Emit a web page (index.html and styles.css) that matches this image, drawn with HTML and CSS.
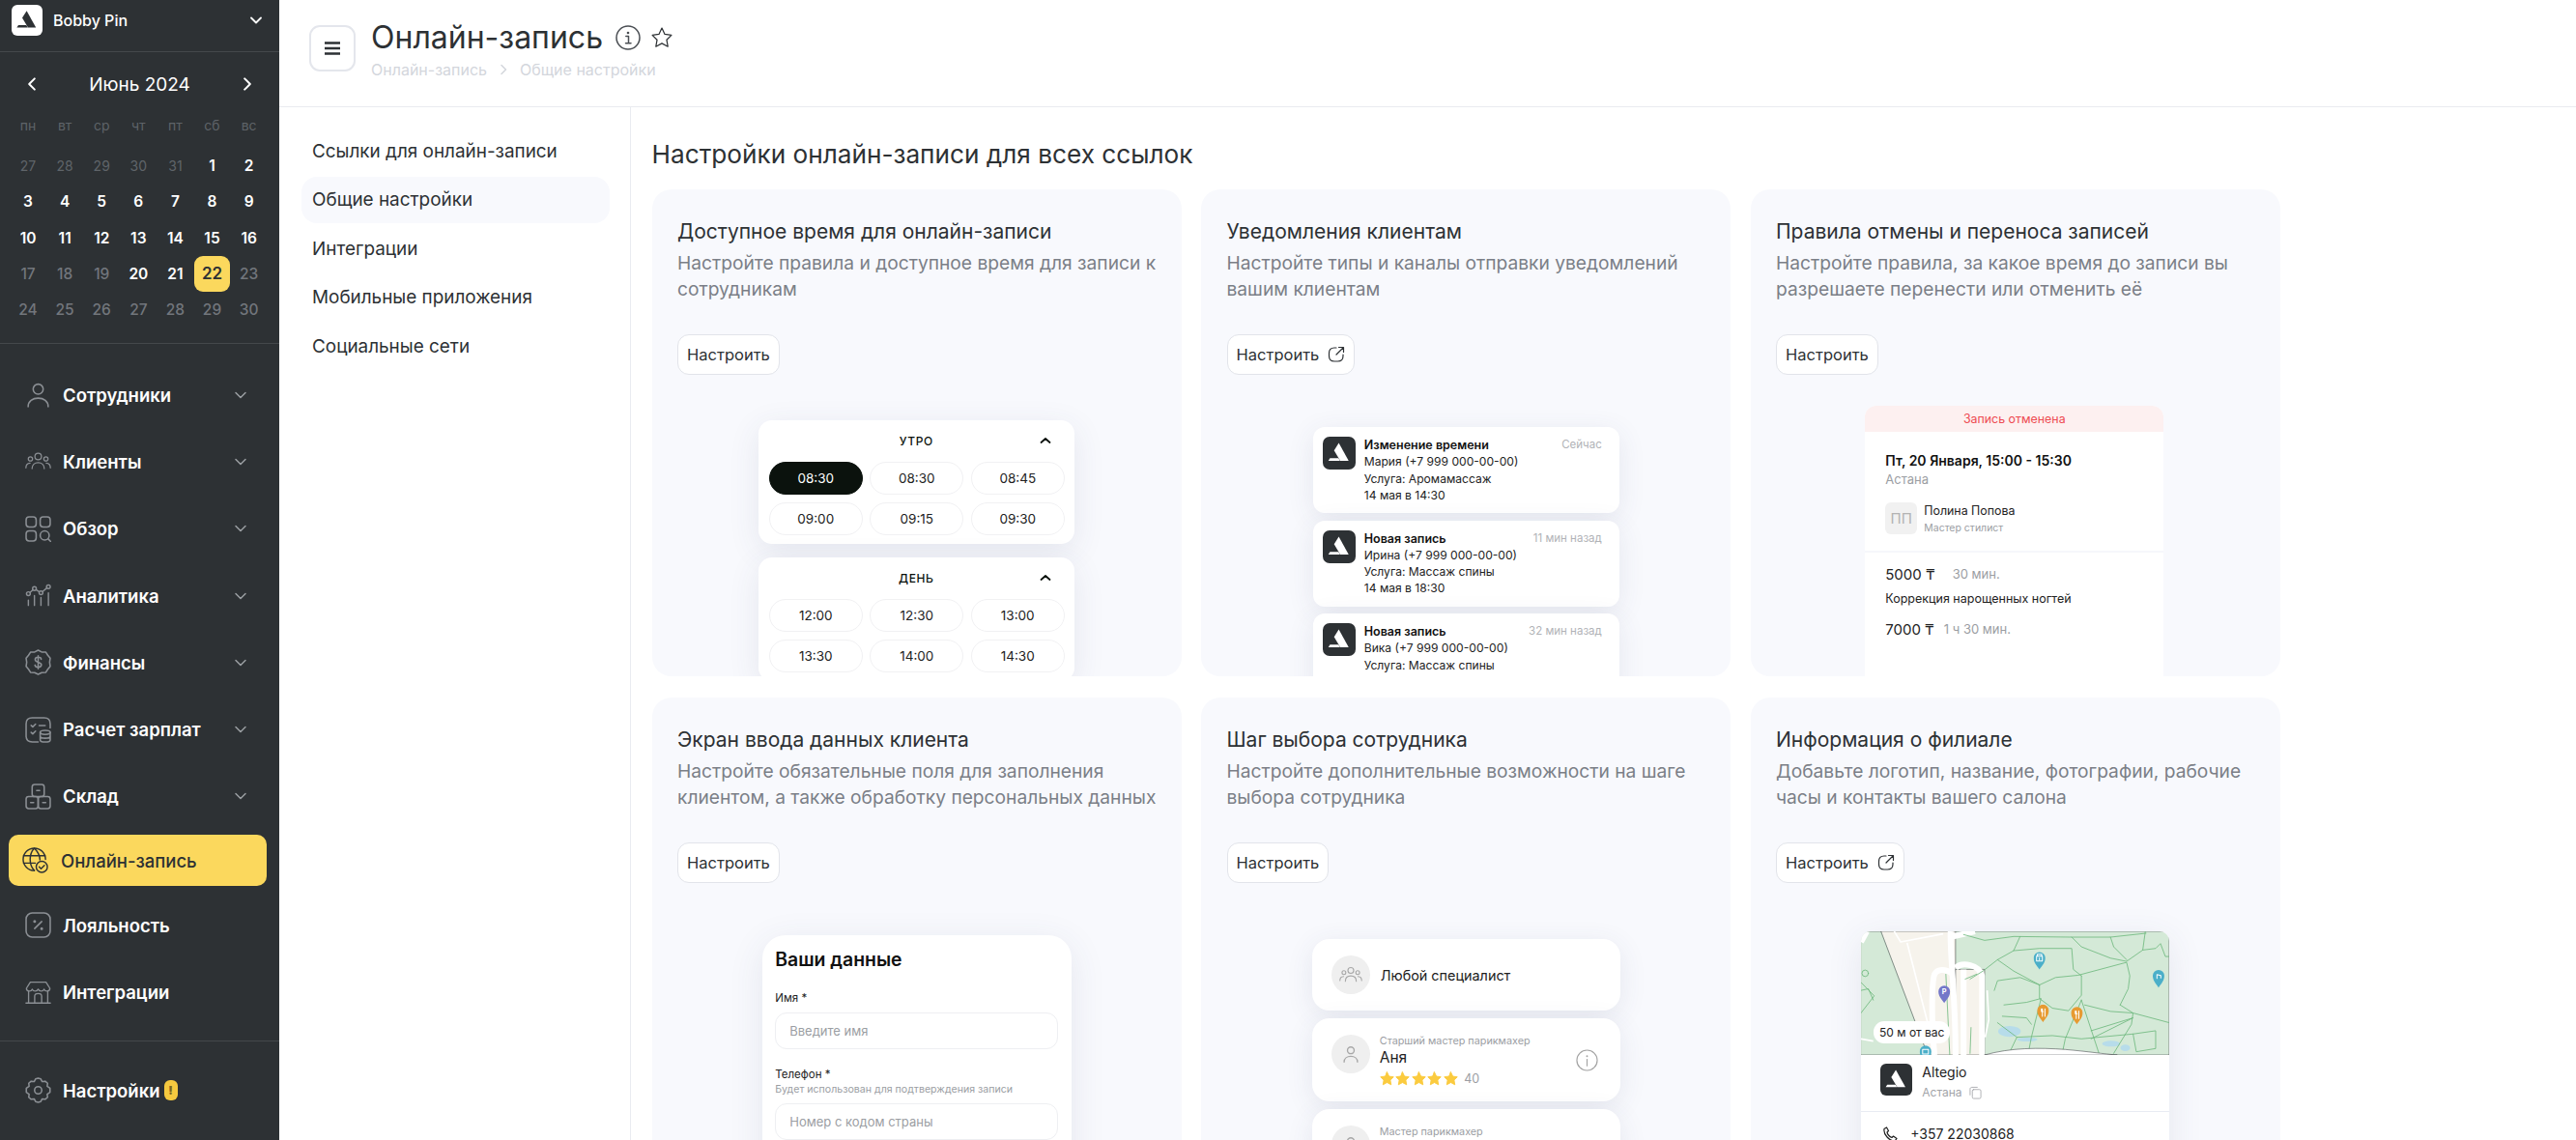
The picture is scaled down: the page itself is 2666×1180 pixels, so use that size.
FILE: index.html
```html
<!DOCTYPE html>
<html lang="ru">
<head>
    <meta charset="UTF-8">
    <meta name="viewport" content="width=device-width, initial-scale=1.0">
    <title>Онлайн-запись</title>
    <link rel="stylesheet" href="styles.css">
</head>
<body>

<svg class="sprite" width="0" height="0">
    <symbol id="logo-mark" viewBox="0 0 32 32">
        <path d="M15.600 6.200 L25.200 23.600 H17 L11 13.500 Z"/>
        <path d="M7 21 H15.200 L16.800 23.600 H5.400 Z"/>
    </symbol>
    <symbol id="chev" viewBox="0 0 16 16"><path d="M3 5.500 L8 10.500 L13 5.500"/></symbol>
    <symbol id="ic-user" viewBox="0 0 26 26">
        <circle cx="13" cy="7.500" r="5"/><path d="M3 25 C3 19.500 7.500 16.500 13 16.500 S23 19.500 23 25"/>
    </symbol>
    <symbol id="ic-clients" viewBox="0 0 32 26">
        <circle cx="16" cy="7" r="4"/><circle cx="6.500" cy="10" r="2.600"/><circle cx="25.500" cy="10" r="2.600"/>
        <path d="M8.500 22 C8.500 17 12 14.500 16 14.500 S23.500 17 23.500 22"/>
        <path d="M1 21 C1 17.500 3 15.500 6 15.300"/><path d="M31 21 C31 17.500 29 15.500 26 15.300"/>
    </symbol>
    <symbol id="ic-review" viewBox="0 0 26 26">
        <rect x="1" y="1" width="10" height="10" rx="3"/><rect x="15" y="1" width="10" height="10" rx="3"/>
        <rect x="1" y="15" width="10" height="10" rx="3"/><circle cx="19.500" cy="19.500" r="4.500"/><path d="M23 23 L26 26"/>
    </symbol>
    <symbol id="ic-chart" viewBox="0 0 28 26">
        <circle cx="3.500" cy="11" r="2"/><circle cx="10" cy="5.500" r="2"/><circle cx="17" cy="10" r="2"/><circle cx="25" cy="3.500" r="2"/>
        <path d="M5.300 9.700 L8.400 6.800 M11.700 6.600 L15.300 9 M18.600 8.800 L23.300 4.800"/>
        <path d="M3.500 18 V23.500 M10 13 V23.500 M17 15 V23.500 M25 10 V23.500"/>
    </symbol>
    <symbol id="ic-money" viewBox="0 0 26 26">
        <path d="M13 1 L16.500 2.800 L20.500 2.800 L22.600 6 L25 9 L24.400 13 L25 17 L22.600 20 L20.500 23.200 L16.500 23.400 L13 25 L9.500 23.400 L5.500 23.200 L3.400 20 L1 17 L1.600 13 L1 9 L3.400 6 L5.500 2.800 L9.500 2.800 Z"/>
        <path d="M16 10 C16 8.400 14.600 8 13 8 C11.200 8 10 8.900 10 10.400 C10 13.600 16.200 12.200 16.200 15.500 C16.200 17.100 14.800 18 13 18 C11.200 18 10 17.300 9.800 15.800 M13 6.600 V19.400"/>
    </symbol>
    <symbol id="ic-payroll" viewBox="0 0 26 26">
        <path d="M13 25 H7 C3 25 1 23 1 19 V7 C1 3 3 1 7 1 H19 C23 1 25 3 25 7 V11"/>
        <path d="M6 8.500 L7.600 10 L10.400 7.200 M14 8.600 H20 M6 15.500 L7.600 17 L10.400 14.200"/>
        <ellipse cx="20" cy="15.500" rx="5" ry="2"/><path d="M15 15.500 V23 C15 24.200 17.200 25 20 25 S25 24.200 25 23 V15.500 M15 19.300 C15 20.500 17.200 21.300 20 21.300 S25 20.500 25 19.300"/>
    </symbol>
    <symbol id="ic-boxes" viewBox="0 0 26 26">
        <rect x="7" y="1" width="12" height="12" rx="2.500"/><rect x="1" y="13" width="12" height="12" rx="2.500"/><rect x="13" y="13" width="12" height="12" rx="2.500"/>
        <path d="M11.500 7 H14.500 M5.500 19 H8.500 M17.500 19 H20.500"/>
    </symbol>
    <symbol id="ic-globe" viewBox="0 0 28 28">
        <path d="M25 13 A12 12 0 1 0 13 25"/><path d="M13 1 C7 7 7 19 13 25 M13 1 C17.500 5.500 19 10 19 13.500 M1.500 9 H24.500 M1.500 17 H14"/>
        <circle cx="21" cy="21" r="6"/><path d="M18.200 21 L20.200 23 L23.800 19.400"/>
    </symbol>
    <symbol id="ic-percent" viewBox="0 0 26 26">
        <rect x="1" y="1" width="24" height="24" rx="6"/><path d="M16.500 9.500 L9.500 16.500"/><circle cx="9.500" cy="9.500" r=".7"/><circle cx="16.500" cy="16.500" r=".7"/>
    </symbol>
    <symbol id="ic-store" viewBox="0 0 30 26">
        <path d="M1 25 H29 M4 11 V25 M26 11 V25 M11 25 V17 C11 15 13 14 15 14 S19 15 19 17 V25"/>
        <path d="M6 1 H24 L28.500 8 C28.500 12 23 12 21.800 9 C20.500 12 16.400 12 15 9 C13.600 12 9.500 12 8.200 9 C7 12 1.500 12 1.500 8 Z"/>
    </symbol>
    <symbol id="ic-gear" viewBox="0 0 26 26">
        <path d="M13 1 L15.600 1.800 L17 4.400 L20 4 L22.400 6 L22 9 L24.800 11 L24.800 15 L22 17 L22.400 20 L20 22 L17 21.600 L15.600 24.200 L13 25 L10.400 24.200 L9 21.600 L6 22 L3.600 20 L4 17 L1.200 15 L1.200 11 L4 9 L3.600 6 L6 4 L9 4.400 L10.400 1.800 Z"/>
        <circle cx="13" cy="13" r="3.600"/>
    </symbol>
    <symbol id="ic-out" viewBox="0 0 18 18">
        <path d="M9 2 H7 C3.500 2 1.500 4 1.500 7.500 V10.500 C1.500 14 3.500 16 7 16 H10.500 C14 16 16 14 16 10.500 V9"/><path d="M9 9 L16 2 M11.500 1.500 H16.500 V6.500"/>
    </symbol>
    <symbol id="ic-star" viewBox="0 0 16 16"><path d="M8 .8 L10.200 5.400 L15.200 6.100 L11.600 9.600 L12.500 14.700 L8 12.300 L3.500 14.700 L4.400 9.600 L.8 6.100 L5.800 5.400 Z"/></symbol>
    <symbol id="ic-pin" viewBox="0 0 38 56"><path d="M19 56 C17 48 1 38 1 19 A18 18 0 0 1 37 19 C37 38 21 48 19 56 Z"/></symbol>
</svg>

<div class="app">
    <aside class="sidebar">
        <div class="brand">
            <span class="brand-logo"><svg class="logo-mark"><use href="#logo-mark"/></svg></span>
            <span class="brand-name">Bobby Pin</span>
            <svg class="brand-chev"><use href="#chev"/></svg>
        </div>

        <div class="calendar">
            <div class="cal-head">
                <svg class="cal-arrow" viewBox="0 0 16 16"><path d="M10.500 3 L5.500 8 L10.500 13"/></svg>
                <span>Июнь 2024</span>
                <svg class="cal-arrow" viewBox="0 0 16 16"><path d="M5.500 3 L10.500 8 L5.500 13"/></svg>
            </div>
            <div class="cal-week">
                <span>пн</span><span>вт</span><span>ср</span><span>чт</span><span>пт</span><span>сб</span><span>вс</span>
            </div>
            <div class="cal-days">
                <span class="d-old">27</span><span class="d-old">28</span><span class="d-old">29</span><span class="d-old">30</span><span class="d-old">31</span><span>1</span><span>2</span>
                <span>3</span><span>4</span><span>5</span><span>6</span><span>7</span><span>8</span><span>9</span>
                <span>10</span><span>11</span><span>12</span><span>13</span><span>14</span><span>15</span><span>16</span>
                <span class="d-off">17</span><span class="d-off">18</span><span class="d-off">19</span><span>20</span><span>21</span><span class="d-today">22</span><span class="d-off">23</span>
                <span class="d-off">24</span><span class="d-off">25</span><span class="d-off">26</span><span class="d-off">27</span><span class="d-off">28</span><span class="d-off">29</span><span class="d-off">30</span>
            </div>
        </div>

        <nav class="nav">
            <a class="nav-item"><svg class="nav-icon"><use href="#ic-user"/></svg><span>Сотрудники</span><svg class="nav-chev"><use href="#chev"/></svg></a>
            <a class="nav-item"><svg class="nav-icon"><use href="#ic-clients"/></svg><span>Клиенты</span><svg class="nav-chev"><use href="#chev"/></svg></a>
            <a class="nav-item"><svg class="nav-icon"><use href="#ic-review"/></svg><span>Обзор</span><svg class="nav-chev"><use href="#chev"/></svg></a>
            <a class="nav-item"><svg class="nav-icon"><use href="#ic-chart"/></svg><span>Аналитика</span><svg class="nav-chev"><use href="#chev"/></svg></a>
            <a class="nav-item"><svg class="nav-icon"><use href="#ic-money"/></svg><span>Финансы</span><svg class="nav-chev"><use href="#chev"/></svg></a>
            <a class="nav-item"><svg class="nav-icon"><use href="#ic-payroll"/></svg><span>Расчет зарплат</span><svg class="nav-chev"><use href="#chev"/></svg></a>
            <a class="nav-item"><svg class="nav-icon"><use href="#ic-boxes"/></svg><span>Склад</span><svg class="nav-chev"><use href="#chev"/></svg></a>
            <a class="nav-item active"><svg class="nav-icon"><use href="#ic-globe"/></svg><span>Онлайн-запись</span></a>
            <a class="nav-item"><svg class="nav-icon"><use href="#ic-percent"/></svg><span>Лояльность</span></a>
            <a class="nav-item"><svg class="nav-icon"><use href="#ic-store"/></svg><span>Интеграции</span></a>
        </nav>

        <div class="nav-bottom">
            <a class="nav-item"><svg class="nav-icon"><use href="#ic-gear"/></svg><span>Настройки</span><b class="nav-badge">!</b></a>
        </div>
    </aside>

    <main class="main">
        <header class="topbar">
            <button class="menu-btn">
                <svg viewBox="0 0 18 14"><path d="M1 1.500 H17 M1 7 H17 M1 12.500 H17"/></svg>
            </button>
            <div class="title-block">
                <div class="title-row">
                    <h1>Онлайн-запись</h1>
                    <svg class="title-info" viewBox="0 0 26 26"><circle cx="13" cy="13" r="12"/><circle class="dot" cx="13" cy="8" r="1.300"/><path d="M10.800 11.500 H13.500 V18.500 M10.500 18.800 H16"/></svg>
                    <svg class="title-star"><use href="#ic-star"/></svg>
                </div>
                <div class="crumbs">
                    <span>Онлайн-запись</span>
                    <svg viewBox="0 0 12 12"><path d="M4 1.500 L8.500 6 L4 10.500"/></svg>
                    <span>Общие настройки</span>
                </div>
            </div>
        </header>

        <div class="body">
            <div class="subnav">
                <a>Ссылки для онлайн-записи</a>
                <a class="active">Общие настройки</a>
                <a>Интеграции</a>
                <a>Мобильные приложения</a>
                <a>Социальные сети</a>
            </div>

            <section class="content">
                <h2>Настройки онлайн-записи для всех ссылок</h2>
                <div class="cards">

                    <article class="card">
                        <h3>Доступное время для онлайн-записи</h3>
                        <p>Настройте правила и доступное время для записи к сотрудникам</p>
                        <button class="btn">Настроить</button>
                        <div class="preview pv-time">
                            <div class="time-panel">
                                <div class="time-head"><span>УТРО</span><svg viewBox="0 0 12 8"><path d="M1.500 6 L6 2 L10.500 6"/></svg></div>
                                <div class="time-grid">
                                    <span class="on">08:30</span><span>08:30</span><span>08:45</span>
                                    <span>09:00</span><span>09:15</span><span>09:30</span>
                                </div>
                            </div>
                            <div class="time-panel">
                                <div class="time-head"><span>ДЕНЬ</span><svg viewBox="0 0 12 8"><path d="M1.500 6 L6 2 L10.500 6"/></svg></div>
                                <div class="time-grid">
                                    <span>12:00</span><span>12:30</span><span>13:00</span>
                                    <span>13:30</span><span>14:00</span><span>14:30</span>
                                </div>
                            </div>
                        </div>
                    </article>

                    <article class="card">
                        <h3>Уведомления клиентам</h3>
                        <p>Настройте типы и каналы отправки уведомлений вашим клиентам</p>
                        <button class="btn">Настроить<svg><use href="#ic-out"/></svg></button>
                        <div class="preview pv-notes">
                            <div class="note">
                                <span class="note-logo"><svg class="logo-mark"><use href="#logo-mark"/></svg></span>
                                <div class="note-text"><strong>Изменение времени</strong><span>Мария (+7 999 000-00-00)</span><span>Услуга: Аромамассаж</span><span>14 мая в 14:30</span></div>
                                <time>Сейчас</time>
                            </div>
                            <div class="note">
                                <span class="note-logo"><svg class="logo-mark"><use href="#logo-mark"/></svg></span>
                                <div class="note-text"><strong>Новая запись</strong><span>Ирина (+7 999 000-00-00)</span><span>Услуга: Массаж спины</span><span>14 мая в 18:30</span></div>
                                <time>11 мин назад</time>
                            </div>
                            <div class="note">
                                <span class="note-logo"><svg class="logo-mark"><use href="#logo-mark"/></svg></span>
                                <div class="note-text"><strong>Новая запись</strong><span>Вика (+7 999 000-00-00)</span><span>Услуга: Массаж спины</span></div>
                                <time>32 мин назад</time>
                            </div>
                        </div>
                    </article>

                    <article class="card">
                        <h3>Правила отмены и переноса записей</h3>
                        <p>Настройте правила, за какое время до записи вы разрешаете перенести или отменить её</p>
                        <button class="btn">Настроить</button>
                        <div class="preview pv-cancel">
                            <div class="cancel-card">
                                <div class="cancel-head">Запись отменена</div>
                                <div class="cancel-top">
                                    <strong>Пт, 20 Января, 15:00 - 15:30</strong>
                                    <span class="muted">Астана</span>
                                    <div class="cancel-person">
                                        <span class="cancel-avatar">ПП</span>
                                        <div><span class="cancel-name">Полина Попова</span><span class="cancel-role">Мастер стилист</span></div>
                                    </div>
                                </div>
                                <div class="cancel-bottom">
                                    <div class="price-row"><span>5000 ₸</span><span class="muted price-gap">30 мин.</span></div>
                                    <div class="cancel-service">Коррекция нарощенных ногтей</div>
                                    <div class="price-row"><span>7000 ₸</span><span class="muted">1 ч 30 мин.</span></div>
                                </div>
                            </div>
                        </div>
                    </article>

                    <article class="card">
                        <h3>Экран ввода данных клиента</h3>
                        <p>Настройте обязательные поля для заполнения клиентом, а также обработку персональных данных</p>
                        <button class="btn">Настроить</button>
                        <div class="preview pv-form">
                            <div class="form-card">
                                <h4>Ваши данные</h4>
                                <label>Имя *</label>
                                <div class="fake-input">Введите имя</div>
                                <label class="label-second">Телефон *</label>
                                <small>Будет использован для подтверждения записи</small>
                                <div class="fake-input">Номер с кодом страны</div>
                            </div>
                        </div>
                    </article>

                    <article class="card">
                        <h3>Шаг выбора сотрудника</h3>
                        <p>Настройте дополнительные возможности на шаге выбора сотрудника</p>
                        <button class="btn">Настроить</button>
                        <div class="preview pv-staff">
                            <div class="staff any">
                                <span class="staff-ava"><svg class="ava-many"><use href="#ic-clients"/></svg></span>
                                <span class="staff-any">Любой специалист</span>
                            </div>
                            <div class="staff">
                                <span class="staff-ava"><svg class="ava-one"><use href="#ic-user"/></svg></span>
                                <div class="staff-text">
                                    <span class="staff-role">Старший мастер парикмахер</span>
                                    <span class="staff-name">Аня</span>
                                    <span class="stars">
                                        <svg><use href="#ic-star"/></svg><svg><use href="#ic-star"/></svg><svg><use href="#ic-star"/></svg><svg><use href="#ic-star"/></svg><svg><use href="#ic-star"/></svg><em>40</em>
                                    </span>
                                </div>
                                <svg class="staff-info" viewBox="0 0 24 24"><circle cx="12" cy="12" r="11"/><circle class="dot" cx="12" cy="7.500" r="1"/><path d="M12 11 V18"/></svg>
                            </div>
                            <div class="staff">
                                <span class="staff-ava"><svg class="ava-one"><use href="#ic-user"/></svg></span>
                                <div class="staff-text">
                                    <span class="staff-role">Мастер парикмахер</span>
                                </div>
                                <svg class="staff-info" viewBox="0 0 24 24"><circle cx="12" cy="12" r="11"/><circle class="dot" cx="12" cy="7.500" r="1"/><path d="M12 11 V18"/></svg>
                            </div>
                        </div>
                    </article>

                    <article class="card">
                        <h3>Информация о филиале</h3>
                        <p>Добавьте логотип, название, фотографии, рабочие часы и контакты вашего салона</p>
                        <button class="btn">Настроить<svg><use href="#ic-out"/></svg></button>
                        <div class="preview pv-branch">
                            <div class="branch-card">
                                <div class="map">
                                    <svg viewBox="7 12 955 383" preserveAspectRatio="none">
                                        <rect x="7" y="12" width="955" height="383" fill="#d4e9d7"/>
                                        <path d="M70 12 H300 V395 H215 Z M300 130 H390 V395 H300 Z" fill="#f6f3ec"/>
                                        <g class="map-lake">
                                            <ellipse cx="467" cy="322" rx="35" ry="17"/>
                                            <ellipse cx="522" cy="347" rx="32" ry="6"/>
                                            <ellipse cx="782" cy="360" rx="28" ry="9"/>
                                            <ellipse cx="826" cy="373" rx="15" ry="10"/>
                                        </g>
                                        <g class="map-road">
                                            <path d="M285 12 C280 60 300 200 300 395"/>
                                            <path d="M283 30 L360 12"/>
                                            <path d="M235 395 C225 300 225 170 235 145 C245 125 275 130 292 145"/>
                                            <path d="M300 125 C320 105 375 115 382 150 V395"/>
                                            <path d="M325 395 V130"/>
                                            <path d="M7 45 L25 12"/>
                                        </g>
                                        <g class="map-road thin">
                                            <path d="M110 12 L130 45 L262 20 M150 48 L225 340 M398 195 L403 285 L392 340 M7 345 L45 352"/>
                                        </g>
                                        <g class="map-path">
                                            <polyline points="325,22 390,40 480,28 660,30 780,30 890,18"/>
                                            <polyline points="500,28 480,72 430,100 385,135 345,160"/>
                                            <polyline points="480,72 560,65 660,65 665,130 690,150"/>
                                            <polyline points="660,30 690,60 780,95 830,105 880,70 888,12"/>
                                            <polyline points="780,30 790,60 830,100"/>
                                            <polyline points="430,100 480,135 560,178 610,155 680,148 830,108 840,150 835,190 810,240"/>
                                            <polyline points="420,195 430,165 500,155 560,178"/>
                                            <polyline points="560,178 560,220 600,250 650,258 690,210 690,150"/>
                                            <polyline points="810,240 850,265 845,300 790,390"/>
                                            <polyline points="450,240 520,232 565,220 535,340 525,392"/>
                                            <polyline points="690,225 745,392"/>
                                            <polyline points="690,225 640,345 630,392"/>
                                            <polyline points="700,240 780,260 850,265 962,295"/>
                                            <polyline points="445,275 520,280 535,300"/>
                                            <polyline points="430,295 490,340 465,392"/>
                                            <polyline points="490,340 600,335 690,345 850,330 920,320 920,375 860,385 850,330"/>
                                            <polyline points="720,320 850,280 720,345"/>
                                            <polyline points="880,70 920,65 935,50 950,90 962,90"/>
                                            <polyline points="7,170 48,212 7,265"/>
                                            <polyline points="7,195 30,190 45,225"/>
                                            <circle cx="20" cy="142" r="10"/>
                                            <polyline points="270,145 282,395"/>
                                            <polyline points="330,160 365,145"/>
                                            <polyline points="348,310 345,390"/>
                                        </g>
                                        <use href="#ic-pin" class="pin-teal" x="541" y="75" width="38" height="56"/>
                                        <use href="#ic-pin" class="pin-teal" x="910" y="131" width="38" height="56"/>
                                        <use href="#ic-pin" class="pin-teal" x="188" y="365" width="38" height="56"/>
                                        <use href="#ic-pin" class="pin-blue" x="246" y="179" width="38" height="56"/>
                                        <use href="#ic-pin" class="pin-orange" x="552" y="238" width="38" height="56"/>
                                        <use href="#ic-pin" class="pin-orange" x="657" y="245" width="38" height="56"/>
                                        <text x="265" y="208" class="map-letter">P</text>
                                        <g class="map-glyph">
                                            <path d="M553 88 V83 H567 V88 M551 89 H569 V104 H551 Z M560 94 V100"/>
                                            <path d="M924 146 V158 M924 146 L936 149 V156"/>
                                            <path d="M566 252 V260 H572 M569 252 V275 M577 252 V275"/>
                                            <path d="M671 259 V267 H677 M674 259 V282 M682 259 V282"/>
                                            <path d="M198 378 H216 V392 H198 Z"/>
                                        </g>
                                        <path d="M390 395 C470 372 560 372 640 378 C710 384 760 392 800 395 Z" fill="#fff"/>
                                    </svg>
                                    <span class="map-chip">50 м от вас</span>
                                </div>
                                <div class="branch-info">
                                    <span class="branch-logo"><svg class="logo-mark"><use href="#logo-mark"/></svg></span>
                                    <div>
                                        <span class="branch-name">Altegio</span>
                                        <span class="branch-city">Астана
                                            <svg viewBox="0 0 14 14"><path d="M9 1 H3 C1.800 1 1 1.800 1 3 V9.500"/><rect x="3.500" y="3.500" width="9.500" height="10" rx="1.500"/></svg>
                                        </span>
                                    </div>
                                </div>
                                <div class="branch-phone">
                                    <svg viewBox="0 0 16 16"><path d="M2 2.500 L4.500 1 L6.500 4.500 L5 6 C5.500 8 7.500 10.500 10 11.500 L11.500 10 L15 12.500 L13 15 C7.500 15 1 8.500 2 2.500 Z"/></svg>
                                    <span>+357 22030868</span>
                                </div>
                            </div>
                        </div>
                    </article>

                </div>
            </section>
        </div>
    </main>
</div>

</body>
</html>
```

FILE: styles.css
```css
* { box-sizing: border-box; }
html, body { margin: 0; height: 100%; overflow: hidden; }
body { font-family: Inter, "Noto Sans", sans-serif; background: #fff; color: #2d3134; }
h1, h2, h3, h4, p { margin: 0; font-weight: 400; }
svg { display: block; fill: none; stroke: currentColor; stroke-width: 1.5; stroke-linecap: round; stroke-linejoin: round; }
.sprite { position: absolute; }

.app { display: flex; height: 1180px; overflow: hidden; }

/* sidebar */
.sidebar { width: 289px; flex: none; background: #2d3134; color: #fff; display: flex; flex-direction: column; }
.brand { height: 54px; padding: 5px 12px 0; display: flex; align-items: flex-start; gap: 11px; border-bottom: 1px solid #44484b; }
.brand-logo { width: 32px; height: 32px; background: #fff; border-radius: 6px; color: #2d3134; }
.logo-mark { width: 100%; height: 100%; fill: currentColor; stroke: none; }
.brand-name { font-size: 16px; line-height: 32px; font-weight: 500; flex: 1; }
.brand-chev { width: 16px; height: 16px; margin: 8px 4px 0 0; stroke-width: 1.8; }

.calendar { height: 302px; padding: 16px 10px 0; border-bottom: 1px solid #44484b; }
.cal-head { height: 34px; padding: 0 14px; display: flex; align-items: center; justify-content: space-between; font-size: 19px; }
.cal-arrow { width: 18px; height: 18px; stroke-width: 1.8; }
.cal-week, .cal-days { display: grid; grid-template-columns: repeat(7, 38.1px); justify-items: center; align-items: center; text-align: center; }
.cal-week { height: 38px; margin: 6px 0 5px; font-size: 14px; color: #5e6368; }
.cal-days { grid-auto-rows: 37.3px; font-size: 15.5px; font-weight: 600; }
.cal-days span { width: 37px; line-height: 37.3px; }
.cal-days .d-old { font-size: 14px; font-weight: 400; color: #5f6469; }
.cal-days .d-off { font-weight: 500; color: #72767c; }
.cal-days .d-today { background: #fbd85d; color: #2d3134; border-radius: 9px; font-size: 17px; font-weight: 600; }

.nav { padding-top: 18px; height: 722px; border-bottom: 1px solid #44484b; }
.nav-item { height: 69.3px; padding-left: 26px; display: flex; align-items: center; gap: 12px; font-size: 18.5px; font-weight: 600; }
.nav-item span { flex: none; }
.nav-icon { width: 27px; height: 27px; flex: none; color: #8b8f94; }
.nav-chev { width: 16px; height: 16px; margin-left: auto; margin-right: 32px; color: #9a9ea2; }
.nav-item.active { height: 53px; margin: 5px 13px 6px 9px; padding-left: 14px; gap: 13px; background: #fbd85d; border-radius: 10px; color: #2d3134; font-weight: 500; }
.nav-item.active .nav-icon { color: #2d3134; }
.nav-bottom { padding-top: 16px; }
.nav-badge { width: 14px; height: 21px; margin-left: -8px; background: #f5c93f; border-radius: 6px; color: #7b6420; font-size: 12px; line-height: 21px; text-align: center; }

/* main */
.main { flex: 1; min-width: 0; display: flex; flex-direction: column; }
.topbar { height: 111px; flex: none; padding: 19px 0 0 31px; display: flex; gap: 16px; border-bottom: 1px solid #e9ebf0; }
.menu-btn { width: 48px; height: 48px; margin-top: 7px; padding: 0; background: #fff; border: 2px solid #e4e6ec; border-radius: 11px; display: flex; align-items: center; justify-content: center; }
.menu-btn svg { width: 18px; height: 14px; stroke: #2d3134; stroke-width: 2.4; stroke-linecap: butt; }
.title-row { height: 40px; display: flex; align-items: center; }
h1 { font-size: 32px; line-height: 40px; }
.title-info { width: 26px; height: 26px; margin-left: 13px; color: #4a4e53; }
.title-info .dot, .staff-info .dot { fill: currentColor; stroke: none; }
.title-star { width: 22px; height: 22px; margin-left: 11px; color: #2d3134; stroke-width: .9; }
.crumbs { margin-top: 3px; height: 20px; display: flex; align-items: center; gap: 11px; font-size: 16px; color: #d3d6dc; }
.crumbs svg { width: 12px; height: 12px; }

.body { flex: 1; min-height: 0; display: flex; }
.subnav { width: 364px; flex: none; padding: 21px 21px 0 23px; border-right: 1px solid #e9ebf0; }
.subnav a { display: flex; align-items: center; height: 48px; margin-bottom: 2.6px; padding-left: 11px; border-radius: 16px; font-size: 18.9px; }
.subnav a.active { background: #f8f9fd; }

.content { flex: 1; min-width: 0; padding: 32px 0 0 21.5px; }
h2 { font-size: 26.2px; line-height: 34px; margin-bottom: 19px; }
.cards { display: grid; grid-template-columns: repeat(3, 548px); grid-auto-rows: 504px; column-gap: 20.5px; row-gap: 22px; }
.card { background: #f8f9fd; border-radius: 20px; padding: 30px 26px 0 26.5px; overflow: hidden; }
.card h3 { font-size: 21px; line-height: 28px; }
.card p { margin-top: 5px; min-height: 54px; font-size: 19.2px; line-height: 27px; color: #7b7f87; }
.btn { height: 42px; margin-top: 33px; padding: 0 9px; display: inline-flex; align-items: center; gap: 9px; background: #fff; border: 1px solid #e2e4ea; border-radius: 12px; font: 400 16.5px Inter, sans-serif; color: #2d3134; }
.btn svg { width: 18px; height: 18px; stroke-width: 1.2; }

.preview { display: flex; flex-direction: column; align-items: center; }
.muted { color: #9b9ea3; }

/* time slots */
.pv-time { margin: 47px 1px 0 0; }
.time-panel { width: 327px; height: 128px; margin-bottom: 14px; padding: 0 11px; background: #fff; border-radius: 14px; box-shadow: 0 8px 32px rgba(60, 70, 110, .1); }
.time-head { height: 43px; display: flex; align-items: center; justify-content: center; position: relative; font-size: 12px; font-weight: 500; letter-spacing: .6px; color: #0b120d; }
.time-head svg { position: absolute; right: 13px; top: 17px; width: 12px; height: 8px; stroke-width: 1.8; }
.time-grid { display: grid; grid-template-columns: repeat(3, 97px); column-gap: 7.5px; row-gap: 7.5px; }
.time-grid span { height: 34px; border: 1.5px solid #f1f1f3; border-radius: 17px; display: flex; align-items: center; justify-content: center; font-size: 13.5px; color: #222; }
.time-grid .on { background: #0b120d; border-color: #0b120d; color: #fff; }

/* notifications */
.pv-notes { margin-top: 54px; gap: 7.5px; }
.note { width: 317px; height: 89px; padding: 10px 18px 0 10px; background: #fff; border-radius: 12px; display: flex; box-shadow: 0 6px 28px rgba(60, 70, 110, .1); }
.note-logo { width: 34px; height: 34px; flex: none; background: #2d3134; color: #fff; border-radius: 7px; }
.note-text { margin-left: 9px; flex: 1; display: flex; flex-direction: column; font-size: 12.1px; line-height: 17.3px; color: #222; }
.note-text strong { font-size: 12.5px; font-weight: 600; color: #111; }
.note time { font-size: 11.5px; line-height: 17.3px; color: #b1b3b7; }

/* cancelled booking */
.pv-cancel { margin: 32px 2px 0 0; }
.cancel-card { width: 309px; height: 280px; background: #fff; border-radius: 12px 12px 0 0; overflow: hidden; }
.cancel-head { height: 27px; line-height: 27px; text-align: center; background: #fdf0f0; color: #ee4b52; font-size: 12.4px; }
.cancel-top { height: 125px; padding: 21px 21px 0; border-bottom: 2px solid #f6f7fb; }
.cancel-top strong { display: block; font-size: 14px; line-height: 18px; font-weight: 600; color: #111; }
.cancel-top .muted { display: block; font-size: 13px; line-height: 20px; }
.cancel-person { margin-top: 14px; display: flex; gap: 7px; }
.cancel-avatar { width: 33px; height: 33px; background: #f1f1f1; border-radius: 6px; color: #b3b3b3; font-size: 15px; line-height: 33px; text-align: center; }
.cancel-name, .cancel-role { display: block; }
.cancel-name { font-size: 12.4px; line-height: 18px; color: #222; }
.cancel-role { margin-top: 1px; font-size: 10.5px; line-height: 15px; color: #9b9ea3; }
.cancel-bottom { padding: 11px 21px 0; }
.price-row { display: flex; gap: 10px; align-items: center; height: 22px; font-size: 15px; color: #222; }
.price-row .muted { font-size: 13px; }
.price-row .price-gap { margin-left: 8px; }
.cancel-service { margin: 5px 0 10px; height: 20px; line-height: 20px; font-size: 12.5px; color: #222; }

/* client form */
.pv-form { margin-top: 54px; }
.form-card { width: 320px; height: 300px; padding: 12px 14px 0 13.5px; background: #fff; border-radius: 24px; box-shadow: 0 8px 36px rgba(60, 70, 110, .1); }
.form-card h4 { font-size: 19.4px; line-height: 26px; font-weight: 600; color: #111; }
.form-card label, .form-card small { display: block; }
.form-card label { margin-top: 20px; font-size: 11.5px; line-height: 15px; color: #222; }
.form-card .label-second { margin-top: 19px; }
.form-card small { font-size: 10.6px; line-height: 15px; color: #9b9ea3; }
.fake-input { height: 38px; margin-top: 7px; padding-left: 14px; line-height: 36px; border: 1px solid #eeeff2; border-radius: 12px; font-size: 13px; color: #9b9ea3; }

/* staff step */
.pv-staff { margin-top: 58px; gap: 8px; }
.staff { width: 319px; min-height: 86px; padding: 0 20px; background: #fff; border-radius: 18px; display: flex; align-items: flex-start; box-shadow: 0 6px 28px rgba(60, 70, 110, .1); position: relative; }
.staff.any { min-height: 74px; align-items: center; }
.staff-ava { width: 40px; height: 40px; flex: none; background: #efefef; border-radius: 50%; display: flex; align-items: center; justify-content: center; color: #a8a8a8; }
.staff:not(.any) .staff-ava { margin-top: 17px; }
.ava-many { width: 24px; height: 20px; stroke-width: 1.5; }
.ava-one { width: 18px; height: 20px; stroke-width: 2; }
.staff-any { margin-left: 11px; font-size: 14.4px; color: #222; }
.staff-text { margin: 16px 0 0 10px; display: flex; flex-direction: column; }
.staff-role { font-size: 10.8px; line-height: 16px; color: #9b9ea3; }
.staff-name { font-size: 15.5px; line-height: 18px; color: #222; }
.stars { margin-top: 4px; display: flex; align-items: center; gap: 1.5px; height: 16px; }
.stars svg { width: 15px; height: 15px; fill: #fbcb3f; stroke: #fbcb3f; stroke-width: 1; }
.stars em { margin-left: 5px; font-style: normal; font-size: 12.5px; color: #9b9ea3; }
.staff-info { position: absolute; right: 23px; top: 32px; width: 23px; height: 23px; color: #a3a3a3; stroke-width: 1.2; }

/* branch */
.pv-branch { margin-top: 50px; }
.branch-card { width: 319px; height: 300px; background: #fff; border-radius: 10px; overflow: hidden; box-shadow: 0 8px 36px rgba(60, 70, 110, .1); }
.map { height: 128px; position: relative; }
.map svg { width: 100%; height: 100%; }
.map-lake ellipse { fill: #b7dcea; stroke: none; }
.map-road path { stroke: #fff; stroke-width: 18; fill: none; stroke-linecap: butt; }
.map-road.thin path { stroke-width: 5; }
.map-path polyline, .map-path circle { fill: none; stroke: #6ab67a; stroke-width: 2.4; }
.pin-teal { fill: #4bafc9; stroke: none; }
.pin-blue { fill: #7377c9; stroke: none; }
.pin-orange { fill: #e79a32; stroke: none; }
.map-letter { fill: #fff; stroke: none; font: 700 22px Inter, sans-serif; text-anchor: middle; }
.map-glyph path { stroke: #fff; stroke-width: 3; fill: none; }
.map-chip { position: absolute; left: 13px; bottom: 12px; width: 79px; height: 23px; line-height: 23px; text-align: center; background: #fff; border-radius: 11px; font-size: 12px; color: #222; }
.branch-info { height: 59px; padding: 9px 0 0 20px; display: flex; gap: 10px; border-bottom: 1px solid #e8ebf3; }
.branch-logo { width: 33px; height: 33px; flex: none; background: #2d3134; color: #fff; border-radius: 6px; }
.branch-name, .branch-city { display: flex; align-items: center; }
.branch-name { font-size: 14px; line-height: 18px; color: #222; }
.branch-city { margin-top: 3px; gap: 7px; font-size: 12px; line-height: 18px; color: #a2a4a8; }
.branch-city svg { width: 13px; height: 14px; stroke-width: .9; }
.branch-phone { padding: 14px 0 0 22px; display: flex; align-items: center; gap: 13px; font-size: 14px; color: #222; }
.branch-phone svg { width: 16px; height: 16px; stroke-width: 1.2; }
```
